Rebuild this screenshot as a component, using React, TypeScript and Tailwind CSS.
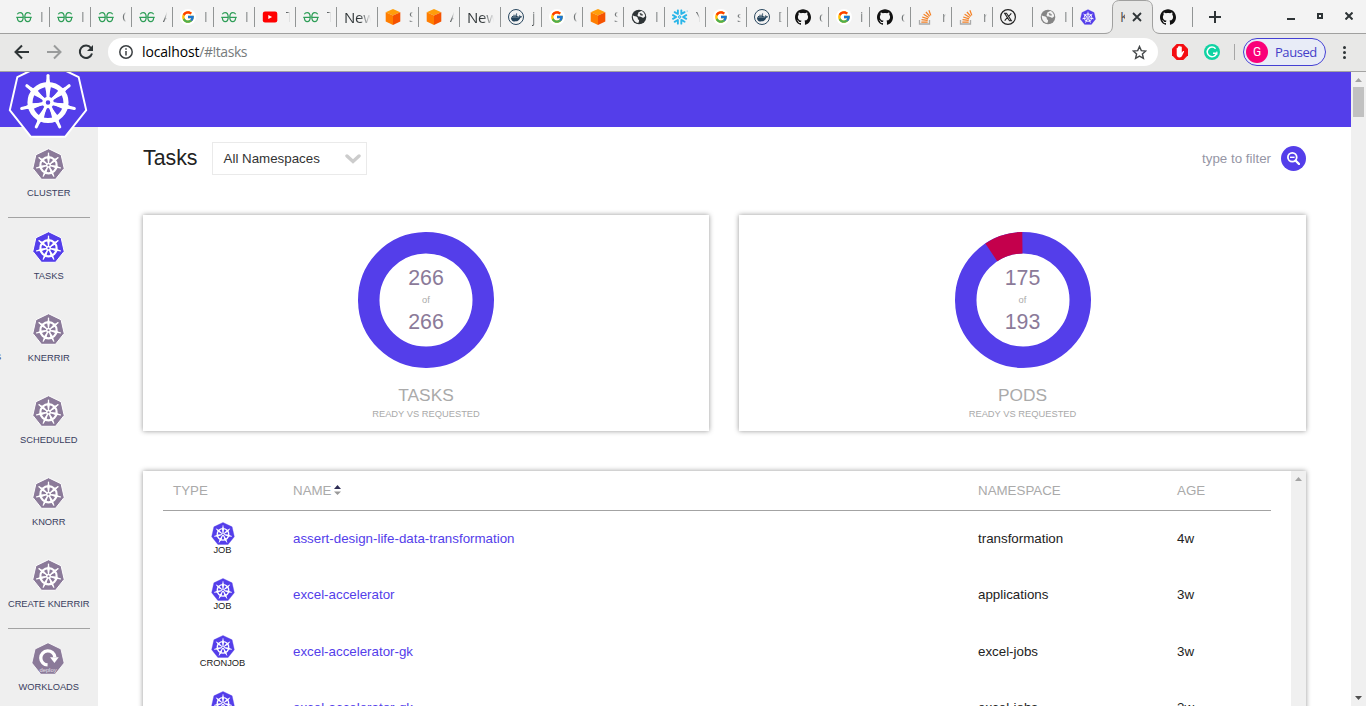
import React from 'react';
import { FcGoogle } from 'react-icons/fc';
import { SiSnowflake, SiGithub, SiDocker } from 'react-icons/si';

const HEPTAGON = '0,-40 31.3,-24.9 39,8.9 17.4,36 -17.4,36 -39,8.9 -31.3,-24.9';
const SPOKES = [0, 1, 2, 3, 4, 5, 6].map((i) => (i * 360) / 7);

type HelmProps = { className: string; fill: string; edge?: number; bold?: number; wheel?: number; body?: number };

function Helm({ className, fill, edge = 1.6, bold = 1, wheel = 1, body = 1 }: HelmProps) {
  return (
    <svg className={className} viewBox="-41 -41.5 82 79">
      <g transform={`scale(${body})`}>
        <polygon points={HEPTAGON} fill={fill} stroke={edge ? '#fff' : fill} strokeWidth={edge || 1} strokeLinejoin="round" />
      </g>
      <g stroke="#fff" fill="none" transform={`translate(0,1) scale(${wheel})`}>
        <circle r="18" strokeWidth={3.8 * bold} />
        {SPOKES.map((a) => (
          <g key={a} transform={`rotate(${a})`}>
            <path d="M0-5V-27" strokeWidth={2.3 * bold} strokeLinecap="round" />
            <path d="M-1-6L-3.2-17H3.2L1-6ZM-2.4-19L-1-24H1L2.4-19Z" fill="#fff" stroke="none" />
          </g>
        ))}
        <circle r="4" strokeWidth={2.6 * bold} />
      </g>
    </svg>
  );
}

function Cube() {
  return (
    <svg className="size-4" viewBox="0 0 16 16">
      <path d="M8 0 15.3 3.3 8 6.6.7 3.3Z" fill="#ff9d0a" />
      <path d="M.7 3.3 8 6.6V16L.7 12.4Z" fill="#ff7d00" />
      <path d="M15.3 3.3 8 6.6V16l7.300-3.600Z" fill="#f55200" />
    </svg>
  );
}

function Gfg() {
  return (
    <svg className="size-4" viewBox="0 0 16 16" fill="none" stroke="#2f9e58" strokeWidth="1.250">
      <path d="M.3 8.300H7.300M8.700 8.300H15.700" />
      <path d="M1.300 5.200C2 4 3 3.500 4.100 3.500 6.300 3.500 7.200 5.500 7.200 8S6.200 12.600 4.200 12.600C2.400 12.600 1.500 11.200 1.300 8.500" />
      <path d="M14.700 5.200C14 4 13 3.500 11.900 3.500 9.700 3.500 8.800 5.500 8.800 8S9.800 12.600 11.800 12.600C13.600 12.600 14.500 11.200 14.700 8.500" />
    </svg>
  );
}

function Whale() {
  return (
    <span className="flex size-4 items-center justify-center rounded-full border border-[#2b4860] text-[11px] text-[#24435b]">
      <SiDocker />
    </span>
  );
}

function Globe({ color }: { color: string }) {
  return (
    <svg className="size-4" viewBox="0 0 16 16">
      <circle cx="8" cy="8" r="7.3" fill={color} />
      <path d="M1.8 6.2c1.4 1.6 3.4.7 4.6 2 .8 1 0 2 1.2 2.6 1 .6.3 1.7-.3 3.2C3.800 13.600 1.600 10.500 1.800 6.200Z" fill="#f3f3f3" />
      <path d="M7.300 3.400c1.700-.5 2.300-1.500 3.500-1.300 1.700.9 3 2.700 3.400 4.800-.8 1.800-2.600 2.200-3.900 1.200-.9-.7-2.600-.2-3.600-1.400-.8-1.200.9-1.500.6-3.300Z" fill="#f3f3f3" />
      <path d="M8.500 4.300h2v1h1.300v1.300H9.700Z" fill={color} />
    </svg>
  );
}

function Stack() {
  return (
    <svg className="mr-px -ml-px size-4" viewBox="0 0 16 16" fill="none">
      <path d="M2.500 11v4h10v-4" stroke="#aaa" strokeWidth="1.300" />
      <path d="M4.300 13h6.400M4.500 10.700l6.200.7M5.200 8l5.900 1.900M6.600 5.300l5.200 3.200M8.900 3l3.900 4.400M11.900 1.200l1.900 5.200" stroke="#f48024" strokeWidth="1.250" />
    </svg>
  );
}

function Tube() {
  return (
    <svg className="size-4" viewBox="0 0 16 16">
      <rect x="0.800" y="2.500" width="14.500" height="11" rx="2.200" fill="#f00" />
      <path d="M6.300 5.900v4.200L10.100 8Z" fill="#fff" />
    </svg>
  );
}

function Xring() {
  return (
    <svg className="size-4" viewBox="0 0 16 16" fill="none" stroke="#222">
      <circle cx="8" cy="8" r="7.400" strokeWidth="1.200" />
      <path d="M4.600 4.300h1.900l4.900 7.400H9.500ZM11.300 4.300l-2.700 3.200M4.700 11.700l2.800-3.300" strokeWidth="1.100" />
    </svg>
  );
}

const Goog = () => (
  <span className="flex size-4 items-center justify-center rounded-full bg-white">
    <FcGoogle className="size-[14px]" />
  </span>
);
const Hub = () => <SiGithub className="size-4 text-[#111]" />;

const wideTabs: [React.ReactNode, string][] = [
  [<Gfg />, 'I'], [<Gfg />, 'I'], [<Gfg />, 'C'], [<Gfg />, 'A'], [<Goog />, 'I'], [<Gfg />, 'I'], [<Tube />, 'T'], [<Gfg />, 'T'],
  [null, 'New'], [<Cube />, 'S'], [<Cube />, 'A'], [null, 'New'], [<Whale />, 'j'], [<Goog />, 'C'], [<Cube />, 'S'],
  [<Globe color="#2e3436" />, 'I'], [<SiSnowflake className="size-4 text-[#29b5e8]" />, 'Y'], [<Goog />, 's'], [<Whale />, 'D'],
  [<Hub />, 'c'], [<Goog />, 'i'], [<Hub />, 'c'], [<Stack />, 'r'], [<Stack />, 'r'],
];

const narrowTabs: [React.ReactNode, string][] = [
  [<Xring />, ''],
  [<Globe color="#858585" />, 'I'],
];

function Tab({ icon, text, width, divider = true }: { icon: React.ReactNode; text: string; width: string; divider?: boolean }) {
  return (
    <div className={`${width} relative flex h-[34px] shrink-0 items-center pl-2`}>
      {icon}
      {icon ? (
        <span className="ml-[8px] w-[4px] overflow-hidden bg-gradient-to-r from-[#2e3436] to-[#f3f3f3] bg-clip-text text-[14px] leading-5 text-transparent">{text}</span>
      ) : (
        <span className="w-[27px] overflow-hidden bg-gradient-to-r from-[#2e3436] from-55% to-[#f3f3f3] bg-clip-text pb-px text-[15px] leading-5 tracking-[-0.2px] text-transparent">{text}</span>
      )}
      {divider && <span className="absolute top-[7px] -right-px h-5 w-px bg-[#929595]" />}
    </div>
  );
}

function TabStrip() {
  return (
    <div className="relative flex h-[34px] shrink-0 border-b border-[#a0a09f] bg-[#f3f3f3] pl-2">
      {wideTabs.map(([icon, text], i) => (
        <Tab key={i} icon={icon} text={text} width="w-[41px]" />
      ))}
      {narrowTabs.map(([icon, text], i) => (
        <Tab key={i} icon={icon} text={text} width="w-10" />
      ))}
      <Tab icon={<Helm className="size-4" fill="#543eea" edge={0} wheel={1.1} />} text="" width="w-10" divider={false} />
      <div className="relative flex h-[34px] w-10 shrink-0 items-center">
        <svg className="absolute top-0 -left-2 h-[34px] w-[57px]" viewBox="0 0 57 34">
          <path d="M0 34V33.500C6 33.500 8.500 31 8.500 25V8C8.500 3 11 .5 16 .5H41C46 .5 48.500 3 48.500 8V25C48.500 31 51 33.500 57 33.500V34Z" fill="#e8e8e7" />
          <path d="M0 33.500C6 33.500 8.500 31 8.500 25V8C8.500 3 11 .5 16 .5H41C46 .5 48.500 3 48.500 8V25C48.500 31 51 33.500 57 33.500" fill="none" stroke="#a0a09f" />
        </svg>
        <span className="relative ml-2 w-[5px] overflow-hidden text-[14px] leading-5 text-[#555]">K</span>
        <svg className="relative ml-[7px] size-[10px]" viewBox="0 0 10 10" stroke="#2e3436" strokeWidth="1.800">
          <path d="M1 1l8 8M9 1l-8 8" />
        </svg>
      </div>
      <Tab icon={<Hub />} text="" width="w-10" />
      <svg className="mt-[11px] ml-[17px] size-3 shrink-0" viewBox="0 0 12 12" stroke="#2e3436" strokeWidth="2">
        <path d="M6 0v12M0 6h12" />
      </svg>
      <div className="ml-auto flex items-center gap-[22px] pr-[13px]">
        <span className="mt-[5px] h-[2px] w-2 bg-[#2e3436]" />
        <span className="mt-[-2px] size-[6px] border-2 border-[#2e3436]" />
        <svg className="-mt-px size-2" viewBox="0 0 8 8" stroke="#2e3436" strokeWidth="2">
          <path d="M.5.5l7 7M7.500.5l-7 7" />
        </svg>
      </div>
    </div>
  );
}

function Toolbar() {
  return (
    <div className="flex h-[38px] shrink-0 items-center border-b border-[#a3a3a2] bg-[#e8e8e7] pb-px">
      <svg className="ml-[14px] size-4" viewBox="0 0 16 16" fill="none" stroke="#2e3436" strokeWidth="2">
        <path d="M15 8H2M8 1.500L1.500 8 8 14.500" />
      </svg>
      <svg className="ml-4 size-4" viewBox="0 0 16 16" fill="none" stroke="#999b9b" strokeWidth="2">
        <path d="M1 8h13M8 1.500L14.500 8 8 14.500" />
      </svg>
      <svg className="ml-4 size-4" viewBox="0 0 16 16" fill="none">
        <path d="M13 4A6.200 6.200 0 1 0 14 9.500" stroke="#2e3436" strokeWidth="2" />
        <path d="M15 1v6H9Z" fill="#2e3436" />
      </svg>
      <div className="ml-[14px] flex h-7 w-[1050px] items-center rounded-full bg-white pr-[11px] pl-[11px]">
        <svg className="size-[14px]" viewBox="0 0 14 14" fill="none" stroke="#3c4043" strokeWidth="1.500">
          <circle cx="7" cy="7" r="6.200" />
          <path d="M7 6v4.500M7 3.300v1.500" />
        </svg>
        <span className="ml-[9px] text-[14px] leading-5 tracking-[-0.450px] text-[#777b7c]">
          <span className="tracking-[-0.150px] text-black">localhost</span>/#!tasks
        </span>
        <svg className="ml-auto size-[15px]" viewBox="0 0 15 15" fill="none" stroke="#444749" strokeWidth="1.400">
          <path d="M7.500 1.500l1.800 4.100 4.500.4-3.400 3 1 4.400-3.900-2.300-3.900 2.300 1-4.400-3.400-3 4.500-.4Z" />
        </svg>
      </div>
      <svg className="ml-[14px] size-4" viewBox="0 0 16 16">
        <path d="M4.700 0h6.600L16 4.700v6.600L11.300 16H4.700L0 11.300V4.700Z" fill="#f40d12" />
        <path d="M4.700 8V4.500c0-.9 1.200-.9 1.200 0V3c0-.9 1.300-.9 1.300 0v-.6c0-.9 1.300-.9 1.300 0V3.200c0-.9 1.300-.9 1.300 0v5.500c.7-1.100 1.300-1.900 2.200-1.500.3.200 0 .8-.3 1.400l-1.600 3.200c-.6 1.200-1.300 1.700-2.600 1.700-2 0-2.800-1.500-2.800-3.300Z" fill="#fff" />
      </svg>
      <svg className="ml-4 size-4" viewBox="0 0 16 16" fill="none">
        <circle cx="8" cy="8" r="8" fill="#0fd3a3" />
        <path d="M11.600 4.700A4.800 4.800 0 1 0 12.600 9.300H9" stroke="#fff" strokeWidth="1.500" />
        <path d="M12.800 7.500v3.500" stroke="#fff" />
      </svg>
      <span className="ml-[14px] h-4 w-px bg-[#a6a6a6]" />
      <div className="ml-2 flex h-7 w-[83px] items-center rounded-full border border-[#4440d4] bg-[#e8ecf7] pl-[2px] text-[13px] text-[#4440c9]">
        <span className="flex size-[22px] items-center justify-center rounded-full bg-[#fa0078] font-[Roboto] text-[12px] text-white">G</span>
        <span className="mt-px ml-[7px] tracking-[-0.450px]">Paused</span>
      </div>
      <div className="ml-[17px] flex flex-col gap-[2px]">
        <span className="size-[3px] rounded-full bg-[#2e3436]" />
        <span className="size-[3px] rounded-full bg-[#2e3436]" />
        <span className="size-[3px] rounded-full bg-[#2e3436]" />
      </div>
    </div>
  );
}

function DeployIcon() {
  return (
    <svg className="mr-[2px] h-[33px] w-[34px]" viewBox="-41 -41.500 82 79">
      <polygon points={HEPTAGON} fill="#8b7a99" stroke="#fff" strokeWidth="2" strokeLinejoin="round" />
      <path d="M-1 13.500A17 17 0 1 1 16.500-5" fill="none" stroke="#fff" strokeWidth="8" />
      <path d="M5-5H26L15.500 9Z" fill="#fff" />
      <text x="0" y="31" textAnchor="middle" fontSize="14" fill="#e6e0ea">deploy</text>
    </svg>
  );
}

function SideItem({ label, active, icon }: { label: string; active?: boolean; icon?: React.ReactNode }) {
  return (
    <div className="flex h-[82px] shrink-0 flex-col items-center pt-[13px]">
      <div className="flex h-[33px] items-start">
        {icon ?? <Helm className="mr-px h-8 w-[33px]" fill={active ? '#543eea' : '#8b7a99'} edge={2.4} bold={1.25} wheel={1.12} />}
      </div>
      <span className="mt-[6px] mr-[0.500px] text-[9.33px] leading-3 whitespace-nowrap text-[#3a4060]">{label}</span>
    </div>
  );
}

function Sidebar() {
  return (
    <div className="relative flex w-[98px] shrink-0 flex-col overflow-hidden bg-[#efefef] px-2 pt-2">
      <SideItem label="CLUSTER" />
      <hr className="shrink-0 border-[#a3a3a3]" />
      <SideItem label="TASKS" active />
      <SideItem label="KNERRIR" />
      <SideItem label="SCHEDULED" />
      <SideItem label="KNORR" />
      <SideItem label="CREATE KNERRIR" />
      <hr className="shrink-0 border-[#a3a3a3]" />
      <SideItem label="WORKLOADS" icon={<DeployIcon />} />
      <span className="absolute top-[224px] left-[-5px] text-[9.33px] leading-3 text-[#3a4060]">S</span>
    </div>
  );
}

function StatCard({ ready, total, title, width }: { ready: number; total: number; title: string; width: string }) {
  const r = 57.25;
  const c = 2 * Math.PI * r;
  const missing = (total - ready) / total;
  return (
    <div className={`${width} flex h-[216px] flex-col items-center bg-white pt-[17px] shadow-[0_0_5px_rgba(0,0,0,0.42)]`}>
      <div className="grid size-[136px] place-items-center">
        <svg className="col-start-1 row-start-1 size-[136px] rotate-[-90.6deg]" viewBox="0 0 136 136" fill="none" strokeWidth="21.500">
          <circle cx="68" cy="68" r={r} stroke="#543eea" />
          {missing > 0 && (
            <circle cx="68" cy="68" r={r} stroke="#c4004c" strokeDasharray={`${c * missing} ${c}`} strokeDashoffset={c * missing - c} />
          )}
        </svg>
        <div className="col-start-1 row-start-1 flex flex-col items-center text-[21.33px] leading-6 text-[#8b7a99]">
          <span>{ready}</span>
          <span className="my-1 text-[9.33px] leading-3 text-[#aaa]">of</span>
          <span>{total}</span>
        </div>
      </div>
      <span className="mt-[17px] text-[17.33px] leading-5 text-[#aaa]">{title}</span>
      <span className="mt-[3px] text-[9.33px] leading-3 text-[#aaa]">READY VS REQUESTED</span>
    </div>
  );
}

const rows = [
  ['JOB', 'assert-design-life-data-transformation', 'transformation', '4w'],
  ['JOB', 'excel-accelerator', 'applications', '3w'],
  ['CRONJOB', 'excel-accelerator-gk', 'excel-jobs', '3w'],
  ['CRONJOB', 'excel-accelerator-gk', 'excel-jobs', '3w'],
];

function TaskTable() {
  return (
    <div className="mt-10 flex h-[260px] shrink-0 bg-white shadow-[0_0_5px_rgba(0,0,0,0.42)]">
      <div className="flex-1 overflow-hidden px-5 text-[13.33px]">
        <div className="grid h-[39.8px] grid-cols-[120px_685px_199px_104px] items-center border-b border-[#a3a3a3] pt-px text-[#aaa] *:pl-[10px]">
          <span>TYPE</span>
          <span className="flex items-center">
            NAME
            <svg className="mb-[2px] ml-[2px] h-[10px] w-[7px]" viewBox="0 0 7 10">
              <path d="M0 4 3.500 0 7 4Z" fill="#2e2d55" />
              <path d="M0 6.500H7L3.500 10Z" fill="#999" />
            </svg>
          </span>
          <span>NAMESPACE</span>
          <span>AGE</span>
        </div>
        {rows.map(([type, name, ns, age], i) => (
          <div key={i} className="grid h-[56.33px] grid-cols-[120px_685px_199px_104px] items-center text-[#222]">
            <span className="-mt-px mr-px flex flex-col items-center text-[9.33px] leading-[10px]">
              <Helm className="h-[23px] w-6" fill="#543eea" edge={0} wheel={1.1} bold={1.1} />
              {type}
            </span>
            <span className="pl-[10px] text-[#543eea]">{name}</span>
            <span className="pl-[10px]">{ns}</span>
            <span className="pl-[10px]">{age}</span>
          </div>
        ))}
      </div>
      <div className="flex w-[15px] justify-center bg-[#f0f0f0] pt-[6px]">
        <svg className="h-[4px] w-[7px]" viewBox="0 0 7 4"><path d="M0 4 3.500 0 7 4Z" fill="#a3a3a3" /></svg>
      </div>
    </div>
  );
}

export default function App() {
  return (
    <div className="flex h-[706px] w-[1366px] flex-col overflow-hidden bg-white font-['Open_Sans','Noto_Sans',sans-serif]">
      <TabStrip />
      <Toolbar />
      <div className="flex min-h-0 flex-1 font-['Liberation_Sans',Arial,sans-serif]">
        <div className="relative flex w-[1351px] flex-col overflow-hidden">
          <div className="h-[55px] shrink-0 bg-[#543eea]" />
          <Helm className="absolute top-[-12.500px] left-[7px] z-10 h-[79px] w-[82px]" fill="#543eea" edge={2} bold={1.35} body={0.98} />
          <div className="flex min-h-0 flex-1">
            <Sidebar />
            <div className="flex flex-1 flex-col px-[45px] pt-[15px]">
              <div className="flex h-[33px] shrink-0 items-center">
                <h1 className="-mt-[2px] text-[21.33px] leading-8 text-[#222]">Tasks</h1>
                <div className="ml-[14.500px] flex h-[33px] w-[155px] items-center justify-between border border-[#eaeaea] pr-[5px] pl-[10.500px] text-[13.33px] text-[#333]">
                  <span className="mt-px">All Namespaces</span>
                  <svg className="h-[10px] w-4" viewBox="0 0 16 10" fill="none" stroke="#ccc" strokeWidth="3.400">
                    <path d="M2 2 8 7.500l6-5.500" strokeLinecap="round" />
                  </svg>
                </div>
                <span className="ml-auto text-[13.33px] text-[#9696a5]">type to filter</span>
                <span className="ml-[10px] flex size-[25px] items-center justify-center rounded-full bg-[#543eea]">
                  <svg className="size-[13px]" viewBox="0 0 13 13" fill="none" stroke="#fff">
                    <circle cx="5.300" cy="5.300" r="4.400" strokeWidth="1.800" />
                    <path d="M3 5.300h4.600" strokeWidth="1.400" />
                    <path d="M8.500 8.500l3.500 3.500" strokeWidth="2.400" strokeLinecap="round" />
                  </svg>
                </span>
              </div>
              <div className="mt-10 flex shrink-0 gap-[30px]">
                <StatCard ready={266} total={266} title="TASKS" width="w-[566px]" />
                <StatCard ready={175} total={193} title="PODS" width="w-[567px]" />
              </div>
              <TaskTable />
            </div>
          </div>
        </div>
        <div className="flex w-[15px] flex-col items-center bg-[#f0f0f0] pt-[6px] pb-[6px]">
          <svg className="h-[4px] w-[7px]" viewBox="0 0 7 4"><path d="M0 4 3.500 0 7 4Z" fill="#a3a3a3" /></svg>
          <span className="mt-[5px] h-[30px] w-[11px] bg-[#c1c1c1]" />
          <svg className="mt-auto h-[4px] w-[7px]" viewBox="0 0 7 4"><path d="M0 0H7L3.500 4Z" fill="#505050" /></svg>
        </div>
      </div>
    </div>
  );
}
